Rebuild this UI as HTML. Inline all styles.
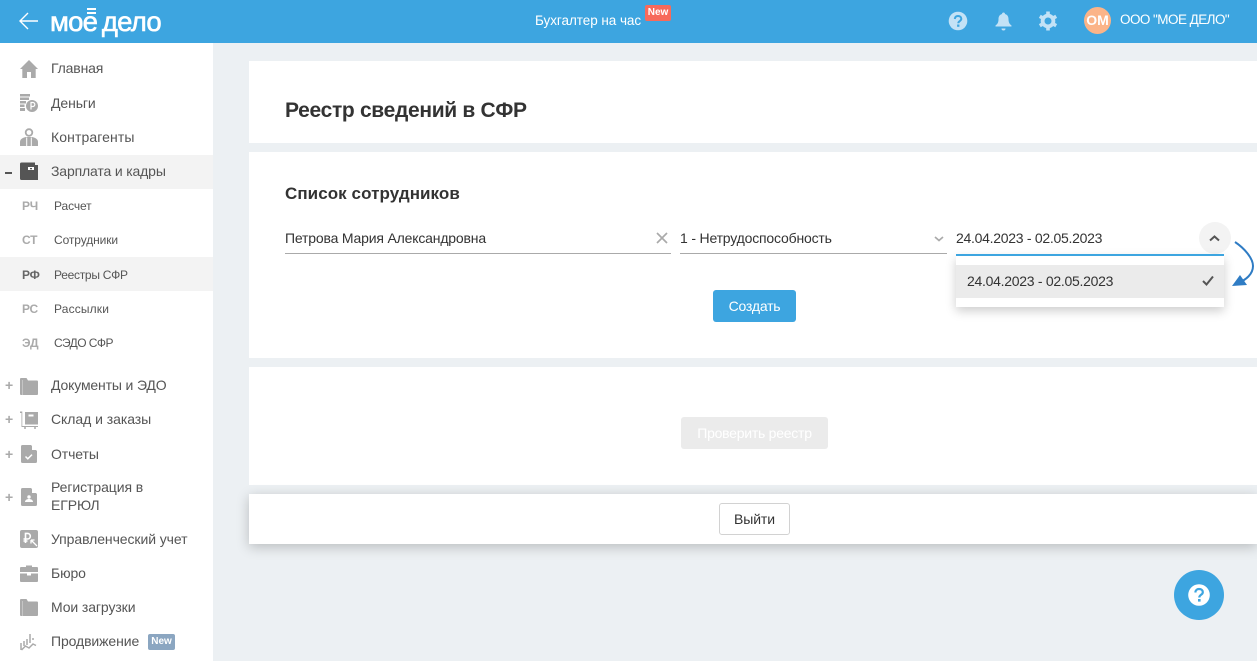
<!DOCTYPE html>
<html lang="ru"><head><meta charset="utf-8"><title>Реестр сведений в СФР</title>
<style>
html,body{margin:0;padding:0;width:1257px;height:661px;overflow:hidden;background:#ecf0f3;font-family:"Liberation Sans",sans-serif;color:#333}
.a{position:absolute}
.t{position:absolute;white-space:nowrap;line-height:18px}
.m{font-size:14px;color:#555;left:51px;letter-spacing:-.1px}
.s{font-size:12px;color:#555;left:54px;letter-spacing:-.1px}
.c{font-size:12px;font-weight:bold;color:#aaa;left:22px;letter-spacing:-.2px}
.p{font-size:14px;font-weight:bold;color:#aaa;left:5px;line-height:18px}
svg{position:absolute;display:block}
</style></head><body>
<div class="a" style="left:0;top:0;width:1257px;height:43px;background:#3da5e0"></div>
<svg style="left:18px;top:11px" width="22" height="20" viewBox="0 0 22 20"><path d="M20 10H2M10 2L2 10l8 8" fill="none" stroke="#fff" stroke-width="1.400"/></svg>
<div class="t" style="left:50px;top:7px;font-size:27.5px;line-height:30px;color:#fff;letter-spacing:-.8px;word-spacing:-2px;-webkit-text-stroke:.6px #fff">мое дело</div>
<div class="a" style="left:87px;top:8px;width:9px;height:2px;background:#fff"></div>
<div class="a" style="left:87px;top:12px;width:9px;height:2px;background:#fff"></div>
<div class="t" style="left:535px;top:12px;font-size:13.5px;color:#fff;letter-spacing:-.05px">Бухгалтер на час</div>
<div class="t" style="left:645px;top:5px;width:26px;height:16px;background:#f76a5b;border-radius:2px;color:#fff;font-size:10px;font-weight:bold;text-align:center;line-height:16px">New</div>
<svg style="left:948px;top:11px" width="20" height="20" viewBox="0 0 20 20"><circle cx="10" cy="10" r="9.300" fill="#c3e2f6"/><path d="M6.800 8C7 5.800 8.300 5 10 5c2 0 3.300 1.100 3.300 2.800 0 2.400-3 2.200-3 4.500" fill="none" stroke="#3da5e0" stroke-width="2"/><rect x="9.100" y="13.500" width="2.300" height="2.300" fill="#3da5e0"/></svg>
<svg style="left:995px;top:12px" width="17" height="19" viewBox="0 0 17 19"><path d="M8.500 0.500c1 0 1.500.7 1.500 1.500 2.500.7 3.500 2.800 3.500 5 0 3.500 1 5 3 6.500v1H.5v-1c2-1.500 3-3 3-6.500 0-2.200 1-4.300 3.500-5 0-.8.5-1.500 1.500-1.500z" fill="#c3e2f6"/><path d="M6.500 16.500h4a2 2 0 0 1-4 0z" fill="#c3e2f6"/></svg>
<svg style="left:1038px;top:11px" width="20" height="20" viewBox="0 0 20 20"><circle cx="10" cy="10" r="5.400" fill="none" stroke="#c3e2f6" stroke-width="3.800"/><path d="M10 .5v4M10 15.500v4M1.800 5.300l3.400 2M14.800 12.700l3.400 2M1.800 14.700l3.400-2M14.800 7.300l3.400-2" stroke="#c3e2f6" stroke-width="3.600"/></svg>
<div class="t" style="left:1084px;top:7px;width:27px;height:27px;border-radius:50%;background:#fbb488;color:#fff;font-size:14px;font-weight:bold;text-align:center;line-height:27px">ОМ</div>
<div class="t" style="left:1120px;top:11px;font-size:13.5px;color:#fff;letter-spacing:-.55px">ООО "МОЕ ДЕЛО"</div>

<div class="a" style="left:0;top:43px;width:213px;height:618px;background:#fff"></div>
<div class="a" style="left:0;top:155px;width:213px;height:34px;background:#f3f3f3"></div>
<div class="a" style="left:0;top:257px;width:213px;height:34px;background:#f3f3f3"></div>

<svg style="left:20px;top:60px" width="18" height="18" viewBox="0 0 18 18"><path d="M9 0L0 9h2.300v9h4.700v-6h4v6h4.700V9H18z" fill="#aaa"/></svg>
<svg style="left:20px;top:94px" width="18" height="18" viewBox="0 0 18 18"><path d="M0 0h10v2.500H0zM0 3.500h9v2.500H0zM0 7h6v2.500H0zM0 10.500h4.500v2.500H0zM0 14h5v3H0z" fill="#aaa"/><circle cx="12" cy="12" r="6" fill="#aaa"/><path d="M11 15.500v-7h1.800a1.800 1.800 0 0 1 0 4H11" fill="none" stroke="#fff" stroke-width="1.200"/></svg>
<svg style="left:20px;top:128px" width="18" height="18" viewBox="0 0 18 18"><circle cx="9" cy="4.500" r="3.300" fill="none" stroke="#aaa" stroke-width="1.800"/><path d="M0 18v-4c0-3 3-4.500 6-5h6c3 .5 6 2 6 5v4z" fill="#aaa"/><path d="M6.700 9.500v8.500M11.300 9.500v8.500" stroke="#fff" stroke-width="1"/></svg>
<svg style="left:20px;top:162px" width="18" height="18" viewBox="0 0 18 18"><path d="M1.500 0.500H15v2.500h3v15H1.500A1.500 1.500 0 0 1 0 16.500V2A1.500 1.500 0 0 1 1.500.5z" fill="#555"/><rect x="8" y="5" width="6" height="3" fill="#fff"/><rect x="10" y="6" width="2" height="1.300" fill="#555"/></svg>
<div class="a" style="left:5px;top:172px;width:7px;height:2px;background:#555"></div>

<svg style="left:20px;top:377px" width="18" height="18" viewBox="0 0 18 18"><path d="M1 1h5.500l1.500 2.500h9a1 1 0 0 1 1 1V17a1 1 0 0 1-1 1H1a1 1 0 0 1-1-1V2a1 1 0 0 1 1-1z" fill="#aaa"/><path d="M2.500 3v15" stroke="#ccc" stroke-width=".8"/></svg>
<svg style="left:20px;top:411px" width="18" height="18" viewBox="0 0 18 18"><path d="M0 .5h2.300v14.500H18v1H1.500V2H0z" fill="#aaa"/><rect x="5" y="1" width="13" height="12.500" fill="#aaa"/><rect x="8.500" y="3.500" width="5" height="2" fill="#fff"/><circle cx="5" cy="17" r="1" fill="#aaa"/><circle cx="15" cy="17" r="1" fill="#aaa"/></svg>
<svg style="left:21px;top:445px" width="16" height="18" viewBox="0 0 16 18"><path d="M1.500 0H10l6 6v10.500a1.500 1.500 0 0 1-1.500 1.500h-13A1.500 1.500 0 0 1 0 16.500v-15A1.500 1.500 0 0 1 1.500 0z" fill="#aaa"/><path d="M11 0v5h5" fill="#fff"/><path d="M4.500 11.500l2.300 2.300 4.200-4.200" fill="none" stroke="#fff" stroke-width="1.500"/></svg>
<svg style="left:21px;top:488px" width="16" height="18" viewBox="0 0 16 18"><path d="M1.500 0H10l6 6v10.500a1.500 1.500 0 0 1-1.500 1.500h-13A1.500 1.500 0 0 1 0 16.500v-15A1.500 1.500 0 0 1 1.500 0z" fill="#aaa"/><path d="M11 0v5h5" fill="#fff"/><circle cx="8" cy="9" r="1.700" fill="#fff"/><path d="M4 14c0-2 2-3 4-3s4 1 4 3z" fill="#fff"/></svg>
<svg style="left:20px;top:530px" width="18" height="18" viewBox="0 0 18 18"><rect width="18" height="18" rx="2" fill="#aaa"/><path d="M3.500 9h4a2.800 2.800 0 0 0 0-5.600H5.500V13M3.500 11h4" fill="none" stroke="#fff" stroke-width="1.600"/><path d="M11 10l6 6M11 10h3.500M11 10v3.500" stroke="#fff" stroke-width="1.300"/></svg>
<svg style="left:20px;top:564px" width="18" height="18" viewBox="0 0 18 18"><path d="M6 3V1.500h6V3h5a1 1 0 0 1 1 1v4H0V4a1 1 0 0 1 1-1z" fill="#aaa"/><path d="M0 9.500h7v2h4v-2h7V17a1 1 0 0 1-1 1H1a1 1 0 0 1-1-1z" fill="#aaa"/></svg>
<svg style="left:20px;top:598px" width="18" height="18" viewBox="0 0 18 18"><path d="M1 1h5.500l1.500 2.500h9a1 1 0 0 1 1 1V17a1 1 0 0 1-1 1H1a1 1 0 0 1-1-1V2a1 1 0 0 1 1-1z" fill="#aaa"/><path d="M2.500 3v15" stroke="#ccc" stroke-width=".8"/></svg>
<svg style="left:20px;top:633px" width="18" height="18" viewBox="0 0 18 18"><path d="M1 10v7M4 8v5M7 6v6M10 1v9M13 5v2M1.500 17l4-4 3.500 2 4-4 3 1.500" fill="none" stroke="#aaa" stroke-width="1.500"/></svg>

<div class="t m" style="top:59px;letter-spacing:-.15px">Главная</div>
<div class="t m" style="top:94px">Деньги</div>
<div class="t m" style="top:128px;letter-spacing:.1px">Контрагенты</div>
<div class="t m" style="top:162px;letter-spacing:-.15px">Зарплата и кадры</div>
<div class="t c" style="top:197px">РЧ</div><div class="t s" style="top:197px">Расчет</div>
<div class="t c" style="top:231px">СТ</div><div class="t s" style="top:231px">Сотрудники</div>
<div class="t c" style="top:266px;color:#666">РФ</div><div class="t s" style="top:266px;letter-spacing:-.28px">Реестры СФР</div>
<div class="t c" style="top:300px">РС</div><div class="t s" style="top:300px;letter-spacing:.15px">Рассылки</div>
<div class="t c" style="top:334px">ЭД</div><div class="t s" style="top:334px;letter-spacing:-.55px">СЭДО СФР</div>
<div class="t p" style="top:376px">+</div><div class="t m" style="top:376px;letter-spacing:-.15px">Документы и ЭДО</div>
<div class="t p" style="top:410px">+</div><div class="t m" style="top:410px;letter-spacing:-.05px">Склад и заказы</div>
<div class="t p" style="top:445px">+</div><div class="t m" style="top:445px">Отчеты</div>
<div class="t p" style="top:488px">+</div><div class="t m" style="top:478px;letter-spacing:-.08px">Регистрация в</div><div class="t m" style="top:496px">ЕГРЮЛ</div>
<div class="t m" style="top:530px;letter-spacing:-.08px">Управленческий учет</div>
<div class="t m" style="top:564px">Бюро</div>
<div class="t m" style="top:598px">Мои загрузки</div>
<div class="t m" style="top:632px">Продвижение</div>
<div class="t" style="left:148px;top:634px;width:27px;height:16px;background:#8ba6c1;border-radius:2px;color:#fff;font-size:10px;font-weight:bold;text-align:center;line-height:16px">New</div>

<div class="a" style="left:249px;top:61px;width:1008px;height:82px;background:#fff"></div>
<div class="a" style="left:249px;top:152px;width:1008px;height:206px;background:#fff"></div>
<div class="a" style="left:249px;top:367px;width:1008px;height:118px;background:#fff"></div>
<div class="a" style="left:249px;top:494px;width:1008px;height:50px;background:#fff;box-shadow:0 3px 12px rgba(0,0,0,.22)"></div>

<div class="t" style="left:285px;top:98px;font-size:21px;line-height:26px;font-weight:bold;color:#333;letter-spacing:-.32px">Реестр сведений в СФР</div>
<div class="t" style="left:285px;top:183px;font-size:17px;line-height:22px;font-weight:bold;color:#333;letter-spacing:.07px">Список сотрудников</div>

<div class="t" style="left:285px;top:229px;font-size:14px;color:#333;letter-spacing:-.18px">Петрова Мария Александровна</div>
<div class="a" style="left:285px;top:253px;width:386px;height:1px;background:#aaa"></div>
<svg style="left:656px;top:232px" width="12" height="12" viewBox="0 0 12 12"><path d="M1 1l10 10M11 1L1 11" stroke="#aaa" stroke-width="1.700"/></svg>
<div class="t" style="left:680px;top:229px;font-size:14px;color:#333;letter-spacing:-.18px">1 - Нетрудоспособность</div>
<div class="a" style="left:680px;top:253px;width:267px;height:1px;background:#aaa"></div>
<svg style="left:934px;top:236px" width="10" height="6" viewBox="0 0 10 6"><path d="M1 1l4 3.500L9 1" fill="none" stroke="#aaa" stroke-width="1.700"/></svg>

<div class="t" style="left:956px;top:229px;font-size:14px;color:#333;letter-spacing:-.28px">24.04.2023 - 02.05.2023</div>
<div class="a" style="left:1199px;top:222px;width:32px;height:32px;border-radius:50%;background:#f3f3f3"></div>
<svg style="left:1209px;top:235px" width="11" height="7" viewBox="0 0 11 7"><path d="M1 5.500L5.500 1.500 10 5.500" fill="none" stroke="#555" stroke-width="2"/></svg>

<div class="a" style="left:956px;top:255px;width:268px;height:52px;background:#fff;box-shadow:0 4px 10px rgba(0,0,0,.2)"></div>
<div class="a" style="left:956px;top:254px;width:268px;height:2px;background:#3da5e0"></div>
<div class="a" style="left:956px;top:265px;width:268px;height:33px;background:#ebebeb"></div>
<div class="t" style="left:967px;top:272px;font-size:14px;color:#333;letter-spacing:-.28px">24.04.2023 - 02.05.2023</div>
<svg style="left:1202px;top:275px" width="12" height="11" viewBox="0 0 12 11"><path d="M1 6l3.500 3.500L11 1.500" fill="none" stroke="#555" stroke-width="2"/></svg>
<svg style="left:1228px;top:238px" width="29" height="52" viewBox="0 0 29 52"><path d="M7 4C16 10 25 20 25 28 25 36 18 42 10 45" fill="none" stroke="#2f7cc4" stroke-width="2"/><path d="M4 48L19 47 12 37z" fill="#2f7cc4"/></svg>

<div class="t" style="left:713px;top:290px;width:83px;height:32px;background:#3da5e0;border-radius:3px;color:#fff;font-size:14px;text-align:center;line-height:32px;letter-spacing:-.2px">Создать</div>
<div class="t" style="left:681px;top:417px;width:147px;height:32px;background:#ebebeb;border-radius:3px;color:#fff;font-size:14px;text-align:center;line-height:32px;letter-spacing:-.25px">Проверить реестр</div>
<div class="t" style="left:719px;top:503px;width:69px;height:30px;border:1px solid #d2d2d2;border-radius:3px;background:#fff;color:#333;font-size:14px;text-align:center;line-height:30px;letter-spacing:-.1px">Выйти</div>

<div class="a" style="left:1174px;top:570px;width:50px;height:50px;border-radius:50%;background:#3da5e0"></div>
<svg style="left:1188px;top:584px" width="22" height="22" viewBox="0 0 22 22"><circle cx="11" cy="11" r="10.800" fill="#fff"/><path d="M7.300 8.500C7.500 6 9.200 5 11 5c2.300 0 3.800 1.300 3.800 3.200 0 2.700-3.500 2.500-3.500 5.300" fill="none" stroke="#3da5e0" stroke-width="2.200"/><rect x="10" y="15" width="2.600" height="2.600" fill="#3da5e0"/></svg>
</body></html>
